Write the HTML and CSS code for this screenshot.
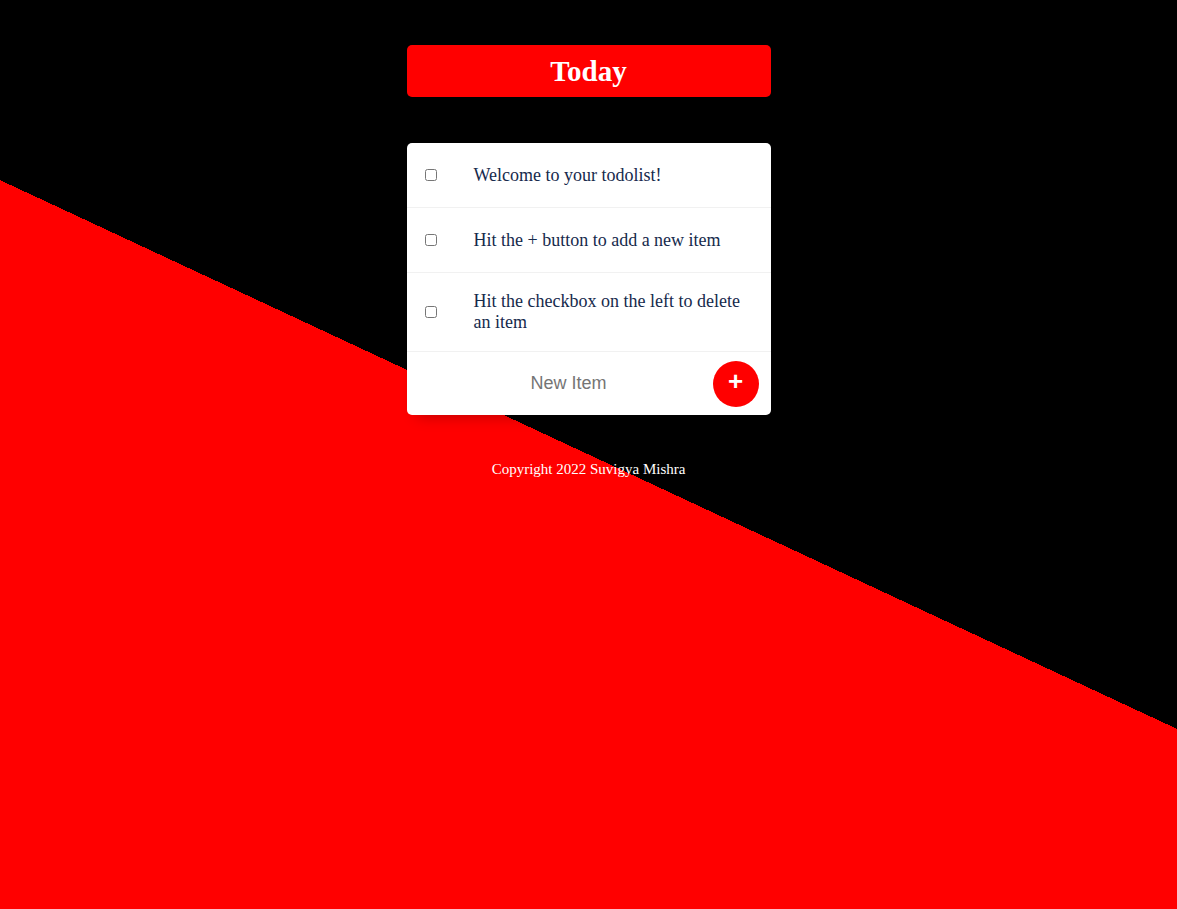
FILE: index.html
```html
<!DOCTYPE html>
<html lang="en">
<head>
<meta charset="utf-8">
<meta name="viewport" content="width=device-width, initial-scale=1">
<title>To Do List</title>
<link rel="stylesheet" href="styles.css">
</head>
<body>
<header class="box heading">
  <h1 class="title">Today</h1>
</header>
<main class="box list">
  <div class="item">
    <input class="check" type="checkbox" id="item-1">
    <label class="item-text" for="item-1">Welcome to your todolist!</label>
  </div>
  <div class="item">
    <input class="check" type="checkbox" id="item-2">
    <label class="item-text" for="item-2">Hit the + button to add a new item</label>
  </div>
  <div class="item">
    <input class="check" type="checkbox" id="item-3">
    <label class="item-text" for="item-3">Hit the checkbox on the left to delete an item</label>
  </div>
  <form class="new-item">
    <input class="new-text" type="text" placeholder="New Item" aria-label="New Item" autocomplete="off">
    <button class="add" type="submit">+</button>
  </form>
</main>
<footer class="footer">Copyright 2022 Suvigya Mishra</footer>
</body>
</html>
```

FILE: styles.css
```css
* {
  box-sizing: border-box;
}

html {
  min-height: 100%;
  background-color: #000;
  background-image: linear-gradient(205deg, #000 50%, #f00 50%);
}

body {
  margin: 0;
  padding: 45px 16px;
  font-family: "Liberation Serif", "Times New Roman", serif;
  color: #fff;
}

.box {
  max-width: 364px;
  margin: 0 auto;
  border-radius: 5px;
  overflow: hidden;
  box-shadow: 5px 5px 15px -5px rgba(0, 0, 0, 0.3);
}

.heading {
  padding: 10px;
  background: #f00;
  text-align: center;
}

.title {
  margin: 0;
  font-size: 29px;
  line-height: 32px;
}

.list {
  margin-top: 46px;
  background: #fff;
}

.item {
  display: flex;
  align-items: center;
  min-height: 65px;
  padding: 18px;
  border-bottom: 1px solid #f1f1f1;
}

.check {
  flex: none;
  width: 12px;
  height: 12px;
  margin: 0 37px 0 0;
}

.item-text {
  font-size: 18px;
  line-height: 21px;
  color: #162a4c;
}

.new-item {
  display: flex;
  align-items: center;
  height: 63px;
  padding-right: 12px;
}

.new-text {
  flex: 1;
  min-width: 0;
  height: 60px;
  padding: 0 0 0 18px;
  border: 0;
  outline: none;
  background: transparent;
  font-family: "Liberation Sans", Arial, sans-serif;
  font-size: 18px;
  text-align: center;
}

.add {
  flex: none;
  width: 46px;
  height: 46px;
  padding: 0 0 5px;
  border: 0;
  border-radius: 50%;
  background: #f00;
  color: #fff;
  font-family: "Liberation Sans", Arial, sans-serif;
  font-size: 26px;
  font-weight: 700;
  line-height: 32px;
}

.footer {
  margin-top: 46px;
  font-size: 15px;
  line-height: 16px;
  text-align: center;
}
```
